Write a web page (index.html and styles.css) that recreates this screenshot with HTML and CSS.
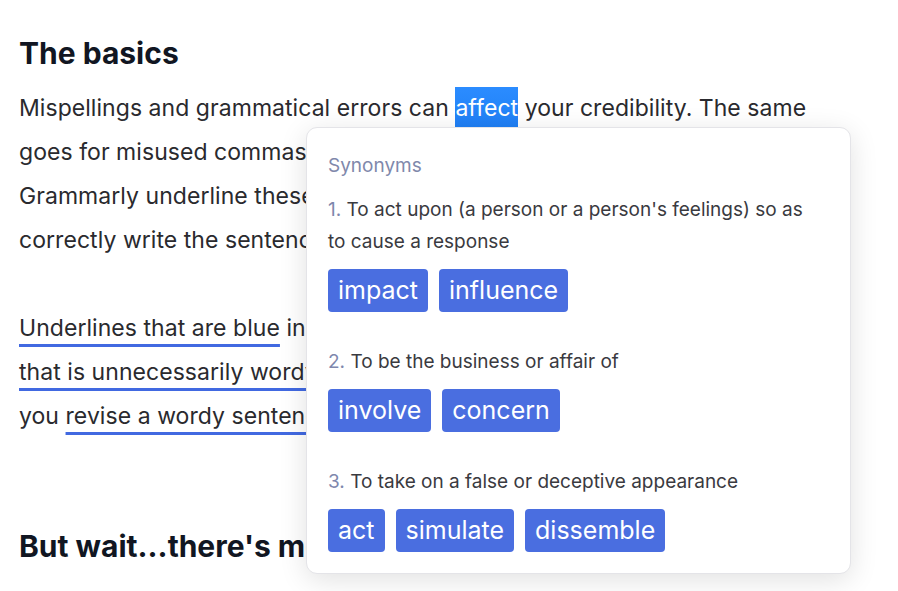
FILE: index.html
```html
<!DOCTYPE html>
<html>
<head>
<meta charset="utf-8">
<link rel="stylesheet" href="styles.css">
</head>
<body>
<div class="page">
  <h2 class="title">The basics</h2>
  <p class="para">Mispellings and grammatical errors can <span class="sel">affect</span> your credibility. The same<br>goes for misused commas, and other types of punctuation. Not only will<br>Grammarly underline these issues in red, it will also show you how to<br>correctly write the sentence.</p>
  <p class="para"><span class="ul">Underlines that are blue</span> indicate that Grammarly has spotted a sentence<br><span class="ul">that is unnecessarily wordy. You'll find suggestions that can possibly help</span><br>you <span class="ul">revise a wordy sentence in an effortless manner.</span></p>
  <h2 class="title title2">But wait...there's more?</h2>
  <p class="para">Grammarly also detects plagiarism and suggests better words.</p>

  <div class="popup">
    <div class="label">Synonyms</div>
    <div class="sense">
      <div class="def"><span class="num">1.</span> To act upon (a person or a person's feelings) so as to cause a response</div>
      <div class="chips"><span class="chip">impact</span><span class="chip">influence</span></div>
    </div>
    <div class="sense">
      <div class="def"><span class="num">2.</span> To be the business or affair of</div>
      <div class="chips"><span class="chip">involve</span><span class="chip">concern</span></div>
    </div>
    <div class="sense">
      <div class="def"><span class="num">3.</span> To take on a false or deceptive appearance</div>
      <div class="chips"><span class="chip">act</span><span class="chip">simulate</span><span class="chip">dissemble</span></div>
    </div>
  </div>
</div>
</body>
</html>
```
FILE: styles.css
```css
html, body {
  margin: 0;
  padding: 0;
  background: #ffffff;
  overflow: hidden;
}
body {
  font-family: Inter, "Noto Sans", sans-serif;
  color: #2a2a2e;
}
.page {
  position: relative;
  width: 898px;
  height: 591px;
  padding: 34px 0 0 19px;
  box-sizing: border-box;
  overflow: hidden;
}
.title {
  margin: 0;
  font-size: 30px;
  font-weight: 700;
  line-height: 38px;
  color: #111622;
}
.title2 {
  margin-top: 89px;
}
.para {
  margin: 0;
  font-size: 23px;
  line-height: 44px;
  white-space: nowrap;
  letter-spacing: 0.05px;
}
.title + .para {
  margin-top: 14px;
}
.para + .para {
  margin-top: 44px;
}
.title2 + .para {
  margin-top: 16px;
}
.sel {
  background: linear-gradient(#2b8cff, #1f7ff5);
  color: #ffffff;
  padding: 7px 0 5px;
}
.ul {
  text-decoration: underline;
  text-decoration-color: #4169e1;
  text-decoration-thickness: 3px;
  text-underline-offset: 8px;
}
.popup {
  position: absolute;
  left: 306px;
  top: 127px;
  width: 545px;
  height: 447px;
  box-sizing: border-box;
  background: #ffffff;
  border: 1px solid #e4e4e8;
  border-radius: 11px;
  box-shadow: 0 6px 28px rgba(0, 0, 0, 0.12);
  padding: 24px 21px 0;
  display: flex;
  flex-direction: column;
}
.label {
  font-size: 19px;
  line-height: 28px;
  color: #8088ab;
}
.sense {
  display: flex;
  flex-direction: column;
}
.sense + .sense {
  margin-top: 34px;
}
.label + .sense {
  margin-top: 14px;
}
.def {
  font-size: 19px;
  line-height: 32px;
  color: #3a3a40;
  width: 485px;
}
.num {
  color: #7e87ad;
}
.chips {
  display: flex;
  gap: 11px;
  margin-top: 11px;
}
.chip {
  background: #4a6ee0;
  color: #ffffff;
  font-size: 25px;
  line-height: 29px;
  padding: 7px 10px;
  border-radius: 4px;
}
```
